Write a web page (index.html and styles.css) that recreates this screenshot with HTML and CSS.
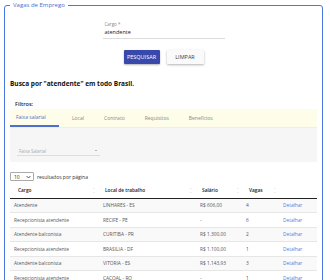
FILE: index.html
```html
<!DOCTYPE html>
<html lang="pt-BR">
<head>
<meta charset="utf-8">
<title>Vagas de Emprego</title>
<link rel="stylesheet" href="styles.css">
</head>
<body>
<fieldset class="box">
  <legend class="box-title">Vagas de Emprego</legend>
  <div class="field">
    <label class="field-label">Cargo *</label>
    <div class="field-input">atendente</div>
  </div>
  <div class="actions">
    <button class="btn btn-primary">PESQUISAR</button>
    <button class="btn btn-light">LIMPAR</button>
  </div>
  <h2 class="summary">Busca por "<span class="hl">atendente</span>" em todo Brasil.</h2>
  <div class="filters-title">Filtros:</div>
  <div class="tabs">
    <div class="tab active">Faixa salarial</div>
    <div class="tab">Local</div>
    <div class="tab">Contrato</div>
    <div class="tab">Requisitos</div>
    <div class="tab">Benefícios</div>
  </div>
  <div class="tab-panel">
    <div class="select">
      <span>Faixa Salarial</span>
      <span class="caret"></span>
    </div>
  </div>
  <div class="length">
    <span class="length-select">10 <svg width="5" height="4" viewBox="0 0 5 4"><path d="M0.6 1 L2.5 3 L4.4 1" fill="none" stroke="#333" stroke-width="0.8"/></svg></span>
    <span>resultados por página</span>
  </div>
  <table class="grid">
    <colgroup>
      <col style="width:88px"><col style="width:97px"><col style="width:47px"><col style="width:37px"><col>
    </colgroup>
    <thead>
      <tr>
        <th>Cargo<span class="sort"></span></th>
        <th>Local de trabalho<span class="sort"></span></th>
        <th>Salário<span class="sort"></span></th>
        <th>Vagas<span class="sort"></span></th>
        <th></th>
      </tr>
    </thead>
    <tbody>
      <tr><td>Atendente</td><td>LINHARES - ES</td><td>R$ 606,00</td><td>4</td><td><a>Detalhar</a></td></tr>
      <tr><td>Recepcionista atendente</td><td>RECIFE - PE</td><td>-</td><td>6</td><td><a>Detalhar</a></td></tr>
      <tr><td>Atendente balconista</td><td>CURITIBA - PR</td><td>R$ 1.300,00</td><td>2</td><td><a>Detalhar</a></td></tr>
      <tr><td>Recepcionista atendente</td><td>BRASILIA - DF</td><td>R$ 1.100,00</td><td>1</td><td><a>Detalhar</a></td></tr>
      <tr><td>Atendente balconista</td><td>VITORIA - ES</td><td>R$ 1.143,93</td><td>3</td><td><a>Detalhar</a></td></tr>
      <tr><td>Recepcionista atendente</td><td>CACOAL - RO</td><td>-</td><td>1</td><td><a>Detalhar</a></td></tr>
    </tbody>
  </table>
</fieldset>
</body>
</html>
```
FILE: styles.css
```css
html, body {
  margin: 0;
  background: #fff;
}
body {
  padding: 1px 7px 0 4px;
  font-family: "Open Sans", "Liberation Sans", sans-serif;
  color: #333;
  height: 280px;
  overflow: hidden;
}
.box {
  margin: 0;
  padding: 0 5px 20px 5px;
  border: 1px solid #4a78e0;
  border-radius: 3px;
  min-width: 0;
}
.box-title {
  padding: 0 3px;
  font-size: 6px;
  line-height: 8px;
  color: #4a6fd0;
}
.field {
  width: 122px;
  margin: 12px auto 0;
}
.field-label {
  display: block;
  font-size: 4.5px;
  line-height: 6px;
  color: #888;
  padding-left: 2px;
}
.field-input {
  height: 11px;
  line-height: 11px;
  font-size: 5.5px;
  color: #222;
  padding-left: 2px;
  border-bottom: 1px solid #ddd;
}
.actions {
  display: flex;
  justify-content: center;
  gap: 7px;
  margin-top: 11px;
}
.btn {
  height: 14px;
  padding: 0;
  border: 0;
  border-radius: 1px;
  font-family: inherit;
  font-size: 5.5px;
}
.btn-primary {
  width: 36px;
  background: #3949ab;
  color: #fff;
  box-shadow: 0 1px 2px rgba(0,0,0,0.3);
}
.btn-light {
  width: 37px;
  background: #fafafa;
  color: #444;
  box-shadow: 0 1px 2.5px rgba(0,0,0,0.3);
}
.summary {
  margin: 15px 0 0;
  font-size: 6.5px;
  line-height: 10px;
  font-weight: 700;
  color: #111;
}
.hl { color: #111; }
.filters-title {
  margin-top: 10px;
  padding-left: 5px;
  font-size: 5.5px;
  line-height: 10px;
  font-weight: 600;
  color: #222;
}
.tabs {
  display: flex;
  gap: 6px;
  height: 19px;
  background: #fdfde9;
  border-bottom: 1px solid #eee;
  box-sizing: border-box;
}
.tab {
  padding: 0 7px;
  font-size: 5px;
  line-height: 18px;
  color: #888;
}
.tab.active {
  width: 36px;
  padding: 0 7px 0 6px;
  color: #4f6fd0;
  border-bottom: 2px solid #4f6fd0;
  line-height: 17px;
}
.tab-panel {
  height: 34px;
  background: #f6f6f6;
  padding: 0 0 0 7px;
  box-sizing: border-box;
  display: flex;
  align-items: flex-end;
}
.select {
  width: 83px;
  height: 10px;
  margin-bottom: 6px;
  display: flex;
  align-items: center;
  justify-content: space-between;
  border-bottom: 1px solid #ddd;
  font-size: 4.5px;
  color: #aaa;
  padding: 0 3px 0 2px;
  box-sizing: border-box;
}
.caret {
  width: 0;
  height: 0;
  border-left: 1.5px solid transparent;
  border-right: 1.5px solid transparent;
  border-top: 1.5px solid #777;
}
.length {
  display: flex;
  align-items: center;
  gap: 3px;
  margin-top: 10px;
  font-size: 5px;
  color: #333;
}
.length-select {
  display: inline-flex;
  align-items: center;
  justify-content: space-between;
  width: 24px;
  height: 9px;
  padding: 0 2px 0 3px;
  box-sizing: border-box;
  border: 1px solid #aaa;
  border-radius: 1px;
  font-size: 5px;
}
.grid {
  width: 307px;
  border-collapse: collapse;
  table-layout: fixed;
  margin-top: 1px;
  font-size: 4.8px;
}
.grid th {
  position: relative;
  text-align: left;
  font-weight: 600;
  color: #222;
  height: 16px;
  padding: 0 0 0 8px;
  border-bottom: 1px solid #222;
  box-sizing: border-box;
}
.grid th:nth-child(2), .grid th:nth-child(3) { padding-left: 7px; }
.grid th:nth-child(4) { padding-left: 7px; }
.sort {
  position: absolute;
  right: 3px;
  top: 6px;
  width: 2px;
  height: 5px;
}
.sort::before, .sort::after {
  content: "";
  position: absolute;
  left: 0;
  border-left: 1px solid transparent;
  border-right: 1px solid transparent;
}
.sort::before { top: 0; border-bottom: 1.5px solid #ddd; }
.sort::after { bottom: 0; border-top: 1.5px solid #ddd; }
.grid td {
  height: 14.5px;
  padding: 0 0 0 4px;
  color: #555;
  border-top: 1px solid #e6e6e6;
  box-sizing: border-box;
  white-space: nowrap;
}
.grid tbody tr:first-child td { border-top: 0; }
.grid tbody tr:nth-child(odd) { background: #f9f9f9; }
.grid td:nth-child(2), .grid td:nth-child(3) { padding-left: 5px; }
.grid td:nth-child(4) { padding-left: 4px; }
.grid a { color: #5a7bd8; }
```
